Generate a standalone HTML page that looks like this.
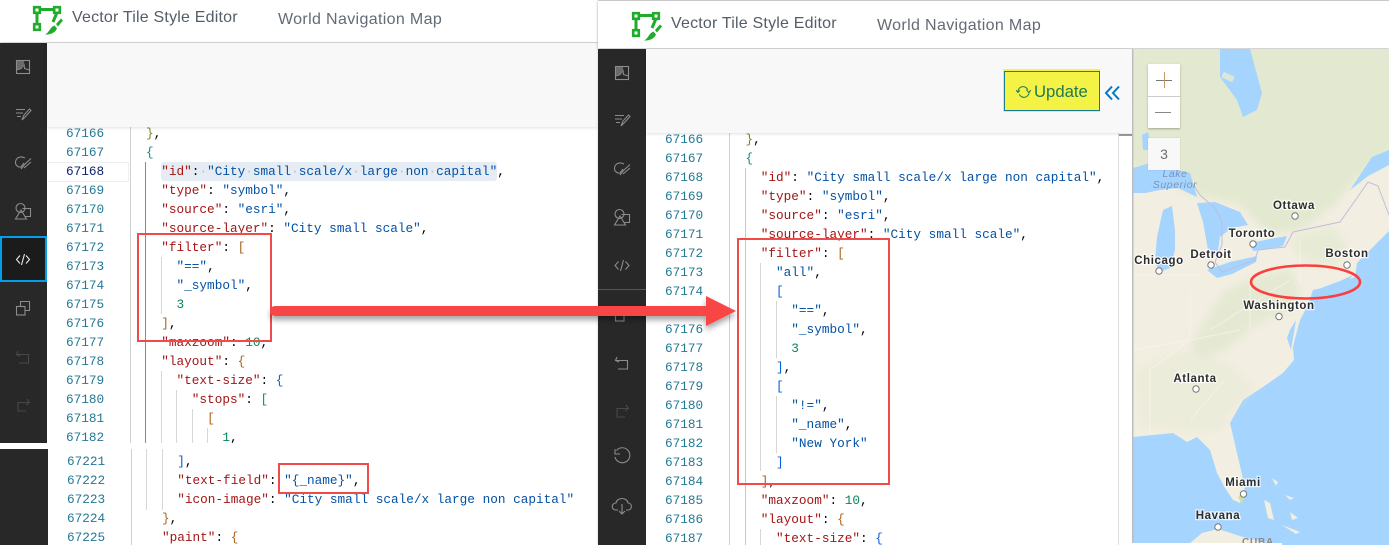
<!DOCTYPE html>
<html><head><meta charset="utf-8">
<style>
html,body{margin:0;padding:0;background:#fff}
#r{position:relative;width:1389px;height:545px;overflow:hidden;background:#fff}
.a{position:absolute}
pre{margin:0;position:absolute;font:12.73px/19px "Liberation Mono","DejaVu Sans Mono",monospace;color:#000;white-space:pre}
.n{color:#237893}
.k{color:#a31515}.s{color:#0451a5}.d{color:#098658}
.o{color:#a8651e}.b{color:#0a5fe0}.t{color:#128a8a}.g{color:#7a8a20}
.w{color:#b8c0c8}
.title{position:absolute;font:16px "Liberation Sans",sans-serif;color:#555d68;white-space:nowrap;letter-spacing:.2px}
.world{letter-spacing:.35px;color:#636b75}
.g1{position:absolute;width:1px;background:#d6d6d6}
.city{font:bold 11.5px "Liberation Sans",sans-serif;fill:#2d2d2d;stroke:#fff;stroke-width:2.4px;paint-order:stroke;letter-spacing:.6px;text-anchor:middle;stroke-opacity:.75}
.dot{fill:#fff;stroke:#777;stroke-width:1}
</style></head><body>
<div id="r">

<!-- LEFT PANEL -->
<div class="a" style="left:0;top:0;width:598px;height:42px;background:#fff;box-shadow:0 1px 2px rgba(0,0,0,.25)"></div>
<svg class="a" style="left:0;top:0" width="70" height="42" viewBox="0 0 70 42">
<g fill="none" stroke="#1fac2a" stroke-width="3"><path d="M37 11V26M40 9.500H54M57 12.500L53 22"/></g>
<g fill="none" stroke="#1fac2a" stroke-width="2.600"><rect x="34.200" y="7.200" width="5.600" height="5.600" fill="#fff"/><rect x="54.200" y="7.200" width="5.600" height="5.600" fill="#fff"/><rect x="34.200" y="24.200" width="5.600" height="5.600" fill="#fff"/></g>
<path d="M56 24L61 18.500L63 20.500L58 26.500Z M54.500 25.500L57 28.500C55 33 50 34.800 45 34.500C49 33 49.500 27.500 54.500 25.500Z" fill="#1fac2a"/>
</svg>
<div class="title" style="left:72px;top:9px">Vector Tile Style Editor</div>
<div class="title world" style="left:278px;top:11px">World Navigation Map</div>

<div class="a" style="left:0;top:43px;width:47px;height:400px;background:#282828"></div>

<!-- left code -->
<div class="a" style="left:130px;top:127px;width:1px;height:316px;background:#d0d0d0"></div>
<div class="a" style="left:131px;top:449px;width:1px;height:96px;background:#d0d0d0"></div>
<div class="a" style="left:48px;top:162px;width:80px;height:18px;border:1px solid #eee;border-left:0"></div>
<div class="a" style="left:161px;top:162px;width:336px;height:19px;background:#e6ecf3;border-radius:3px"></div>
<div class="g1" style="left:145px;top:162px;height:281px;background:#8a8a8a"></div>
<div class="g1" style="left:161px;top:257px;height:57px"></div>
<div class="g1" style="left:161px;top:371px;height:72px"></div>
<div class="g1" style="left:176px;top:390px;height:53px"></div>
<div class="g1" style="left:192px;top:409px;height:34px"></div>
<div class="g1" style="left:207px;top:428px;height:15px"></div>
<div class="g1" style="left:146px;top:449px;height:61px"></div>
<div class="g1" style="left:162px;top:449px;height:61px"></div>

<pre class="n" style="left:66px;top:124px">67166
67167
<span style="color:#0b216f">67168</span>
67169
67170
67171
67172
67173
67174
67175
67176
67177
67178
67179
67180
67181
67182</pre>
<pre style="left:146px;top:124px"><span class="g">}</span>,
<span class="t">{</span>
  <span class="k">"id"</span>:<span class="w">·</span><span class="s">"City<span class="w">·</span>small<span class="w">·</span>scale/x<span class="w">·</span>large<span class="w">·</span>non<span class="w">·</span>capital"</span>,
  <span class="k">"type"</span>: <span class="s">"symbol"</span>,
  <span class="k">"source"</span>: <span class="s">"esri"</span>,
  <span class="k">"source-layer"</span>: <span class="s">"City small scale"</span>,
  <span class="k">"filter"</span>: <span class="o">[</span>
    <span class="s">"=="</span>,
    <span class="s">"_symbol"</span>,
    <span class="d">3</span>
  <span class="o">]</span>,
  <span class="k">"maxzoom"</span>: <span class="d">10</span>,
  <span class="k">"layout"</span>: <span class="o">{</span>
    <span class="k">"text-size"</span>: <span class="b">{</span>
      <span class="k">"stops"</span>: <span class="t">[</span>
        <span class="o">[</span>
          <span class="d">1</span>,</pre>
<div class="a" style="left:0;top:443px;width:598px;height:6px;background:#fff"></div>
<div class="a" style="left:0;top:449px;width:48px;height:96px;background:#282828"></div>
<pre class="n" style="left:67px;top:452px">67221
67222
67223
67224
67225</pre>
<pre style="left:162px;top:452px">  <span class="b">]</span>,
  <span class="k">"text-field"</span>: <span class="s">"{_name}"</span>,
  <span class="k">"icon-image"</span>: <span class="s">"City small scale/x large non capital"</span>
<span class="o">}</span>,
<span class="k">"paint"</span>: <span class="o">{</span></pre>

<div class="a" style="left:47px;top:43px;width:551px;height:84px;background:#f8f8f8;box-shadow:0 1px 3px rgba(0,0,0,.12)"></div>

<!-- left sidebar icons -->
<svg class="a" style="left:0;top:43px" width="47" height="400" viewBox="0 43 47 400" fill="none" stroke="#8c8c8c" stroke-width="1.100">
<rect x="16.500" y="60.500" width="13" height="13"/><path d="M16.500 70L21 68.500 24 64.500 24.500 68.500 29.500 70"/><path d="M17 61H24L24 65 21 68 17 69.500Z" fill="#6a6a6a" stroke="none"/>
<path d="M16 109.500H25M16 113H23M17 116.500H21M22 120L24 115 29.500 109 31 110.500 25.500 116.500Z"/>
<path d="M25 158C19 155 15.500 159 15.500 162.500C15.500 166 19 167.500 21 167L24 163M19 161.500h.1M22 159.500h.1M18.500 165h.1M21 169L25 164 31 158.500M24 168L31 162"/>
<circle cx="20.500" cy="208" r="4.500"/><path d="M22.500 208.500H30.500V216.500H25M21 210L15.500 219H26.500Z"/>
<rect x="16.500" y="306.500" width="8.500" height="8.500"/><path d="M20.500 306V301.500H29.500V310.500H25"/>
<g stroke="#484848"><path d="M18 351L16.500 354.500 20 356M17 354.500H28.500V363H19"/><path d="M27 399L29.500 402.500 26 405M29 402.500H18V411H26"/></g>
</svg>
<div class="a" style="left:0;top:236px;width:47px;height:46px;box-sizing:border-box;border:2.500px solid #009fee;background:#1b1b1b"></div>
<svg class="a" style="left:0;top:236px" width="47" height="46" fill="none" stroke="#e8e8e8" stroke-width="1.100"><path d="M20 19.500L16.500 23.500 20 27.500M26 19.500L29.500 23.500 26 27.500M24.500 18L21.500 29"/></svg>

<!-- RED BOXES LEFT -->
<div class="a" style="left:137px;top:233px;width:135px;height:109px;border:2px solid #f04a4a;box-sizing:border-box"></div>
<div class="a" style="left:278px;top:463px;width:91px;height:31px;border:2px solid #f04a4a;box-sizing:border-box"></div>

<!-- RIGHT PANEL -->
<div class="a" style="left:598px;top:0;width:791px;height:545px;background:#fff;box-shadow:-1px 0 2px rgba(0,0,0,.08)"></div>
<div class="a" style="left:598px;top:0;width:791px;height:1px;background:#ccc"></div>
<div class="a" style="left:598px;top:1px;width:791px;height:47px;background:#fff;box-shadow:0 1px 2px rgba(0,0,0,.25)"></div>
<svg class="a" style="left:599px;top:6px" width="70" height="42" viewBox="0 0 70 42">
<g fill="none" stroke="#1fac2a" stroke-width="3"><path d="M37 11V26M40 9.500H54M57 12.500L53 22"/></g>
<g fill="none" stroke="#1fac2a" stroke-width="2.600"><rect x="34.200" y="7.200" width="5.600" height="5.600" fill="#fff"/><rect x="54.200" y="7.200" width="5.600" height="5.600" fill="#fff"/><rect x="34.200" y="24.200" width="5.600" height="5.600" fill="#fff"/></g>
<path d="M56 24L61 18.500L63 20.500L58 26.500Z M54.500 25.500L57 28.500C55 33 50 34.800 45 34.500C49 33 49.500 27.500 54.500 25.500Z" fill="#1fac2a"/>
</svg>
<div class="title" style="left:671px;top:15px">Vector Tile Style Editor</div>
<div class="title world" style="left:877px;top:17px">World Navigation Map</div>

<div class="a" style="left:598px;top:49px;width:48px;height:496px;background:#282828"></div>
<div class="a" style="left:598px;top:289px;width:48px;height:1px;background:#555"></div>

<!-- right code -->
<div class="a" style="left:729px;top:133px;width:1px;height:412px;background:#d0d0d0"></div>
<div class="g1" style="left:745px;top:168px;height:377px;background:#c8c8c8"></div>
<div class="g1" style="left:760px;top:263px;height:208px"></div>
<div class="g1" style="left:760px;top:529px;height:16px"></div>
<div class="g1" style="left:776px;top:301px;height:57px"></div>
<div class="g1" style="left:776px;top:396px;height:57px"></div>
<pre class="n" style="left:665px;top:130px">67166
67167
67168
67169
67170
67171
67172
67173
67174

67176
67177
67178
67179
67180
67181
67182
67183
67184
67185
67186
67187</pre>
<pre style="left:745.500px;top:130px"><span class="g">}</span>,
<span class="t">{</span>
  <span class="k">"id"</span>: <span class="s">"City small scale/x large non capital"</span>,
  <span class="k">"type"</span>: <span class="s">"symbol"</span>,
  <span class="k">"source"</span>: <span class="s">"esri"</span>,
  <span class="k">"source-layer"</span>: <span class="s">"City small scale"</span>,
  <span class="k">"filter"</span>: <span class="o">[</span>
    <span class="s">"all"</span>,
    <span class="b">[</span>
      <span class="s">"=="</span>,
      <span class="s">"_symbol"</span>,
      <span class="d">3</span>
    <span class="b">]</span>,
    <span class="b">[</span>
      <span class="s">"!="</span>,
      <span class="s">"_name"</span>,
      <span class="s">"New York"</span>
    <span class="b">]</span>
  <span class="o">]</span>,
  <span class="k">"maxzoom"</span>: <span class="d">10</span>,
  <span class="k">"layout"</span>: <span class="o">{</span>
    <span class="k">"text-size"</span>: <span class="b">{</span></pre>

<!-- right scroll column -->
<div class="a" style="left:1118px;top:133px;width:15px;height:412px;background:#fff;border-left:1px solid #ddd;box-sizing:border-box"></div>
<div class="a" style="left:1119px;top:134px;width:14px;height:2px;background:#999"></div>
<div class="a" style="left:646px;top:49px;width:486px;height:84px;background:#f8f8f8;box-shadow:0 1px 3px rgba(0,0,0,.12)"></div>

<!-- update -->
<div class="a" style="left:1003px;top:69px;width:97px;height:43px;background:#f5f246"></div>
<div class="a" style="left:1004px;top:71px;width:96px;height:40px;box-sizing:border-box;border:1px solid #1a7a90"></div>
<svg class="a" style="left:1016px;top:85px" width="15" height="14" viewBox="0 0 16 15" fill="none" stroke="#1e7c50" stroke-width="1.100"><path d="M2 7A5.500 5.500 0 0 1 12.500 5M14 8A5.500 5.500 0 0 1 3.500 10"/><path d="M0 5.500L2 8 4.200 5.800M11 5L13.800 8 16 5.500"/></svg>
<div class="a" style="left:1034px;top:82px;font:16.700px 'Liberation Sans',sans-serif;color:#1c7a55">Update</div>
<svg class="a" style="left:1104px;top:85px" width="17" height="16" viewBox="0 0 17 16" fill="none" stroke="#0079c1" stroke-width="2"><path d="M8 1.500L2 8l6 6.500M15 1.500L9 8l6 6.500"/></svg>

<!-- MAP -->
<svg class="a" style="left:1132px;top:49px" width="257" height="496" viewBox="1132 49 257 496">
<defs><filter id="bl" x="-10%" y="-10%" width="120%" height="120%"><feGaussianBlur stdDeviation="4"/></filter></defs>
<rect x="1132" y="49" width="257" height="496" fill="#a5d4ff"/>
<path fill="#f2eee1" d="M1132 49H1389V231L1372 248 1357 263 1355 277 1340 283 1322 288 1313 290 1308 305 1300 320 1296 335 1293 347 1294 360 1283 373 1263 387 1243 400 1230 423 1234 440 1237 453 1245 487 1240 503 1233 500 1225 488 1217 473 1210 450 1197 437 1187 442 1173 433 1153 435 1133 437 1132 437Z"/>
<g filter="url(#bl)" fill="#e3e9d0">
<path d="M1132 40H1395V150L1350 185 1335 205 1300 230 1270 235 1240 205 1195 195 1140 170 1125 160Z"/>
<path d="M1290 240L1332 225 1350 250 1330 268 1300 258Z" opacity=".7"/>
<path d="M1225 290L1262 275 1290 268 1300 290 1290 310 1255 325 1225 350 1200 360 1190 345Z" opacity=".85"/>
<path d="M1133 370L1180 350 1230 365 1255 390 1232 410 1222 430 1190 432 1140 425Z" opacity=".4"/>
</g>
<g fill="none" stroke="#f8f5ee" stroke-width="1" opacity=".7">
<path d="M1190 290V340M1133 350L1190 340 1240 330M1150 435V370L1190 340M1225 380L1190 420M1290 280L1210 330M1133 275H1205M1250 280V330M1300 240V285"/>
</g>
<path d="M1238 497L1245 492 1242 504Z" fill="#cfe0a8"/>
<g fill="#a5d4ff">
<path d="M1220 49H1250L1262 93 1257 110 1243 117 1237 100 1220 77Z"/>
<path d="M1142 135L1148 132 1152 150 1143 150Z"/>
<path d="M1133 168L1150 163 1190 173 1197 197 1178 188 1160 190 1145 193 1133 193Z"/>
<path d="M1163 210L1172 206 1175 230 1175 250 1170 268 1160 272 1155 262 1157 237Z"/>
<path d="M1197 203L1215 202 1240 212 1248 225 1232 228 1220 237 1217 257 1208 250 1203 222Z"/>
<path d="M1250 243L1270 239 1287 236 1283 246 1262 250 1253 251Z"/>
<path d="M1207 270L1230 262 1257 256 1256 262 1232 274 1217 278Z"/>
<path d="M1389 150L1372 157 1350 190 1368 176 1389 165Z"/>
<path d="M1313 291L1340 281 1353 275 1345 285 1322 292Z"/>
<path d="M1290 330L1296 320 1291 350 1287 338Z"/>
</g>
<rect x="1222" y="74" width="12" height="6" fill="#e3e9d0" opacity=".9" transform="rotate(25 1228 77)"/>
<g fill="none" stroke="#c2bdd9" stroke-width="1"><path d="M1190 180L1200 195 1215 208 1222 222 1222 245 1215 262 1222 272 1255 260 1258 250 1285 247 1293 232 1340 222 1352 205 1368 182 1378 186 1389 215"/></g>
<g fill="#f2eee1">
<path d="M1190 543L1202 533 1218 529 1243 537 1277 545 1190 545Z"/>
<path d="M1264 500L1270 503 1274 520 1268 518Z"/>
<path d="M1272 478L1278 482 1276 486Z M1285 495L1290 500 1294 498Z M1290 512L1298 518 1292 520Z M1282 525L1300 532 1296 534Z"/>
</g>
<text x="1175" y="177" text-anchor="middle" font-family="Liberation Sans,sans-serif" font-style="italic" font-size="10.500" fill="#7a93bd" letter-spacing=".6">Lake</text>
<text x="1175" y="188" text-anchor="middle" font-family="Liberation Sans,sans-serif" font-style="italic" font-size="10.500" fill="#7a93bd" letter-spacing=".6">Superior</text>
<text class="city" x="1294" y="209">Ottawa</text><circle class="dot" cx="1295" cy="216" r="3.200"/>
<text class="city" x="1252" y="237">Toronto</text><circle class="dot" cx="1253" cy="244" r="3.200"/>
<text class="city" x="1159" y="264">Chicago</text><circle class="dot" cx="1159" cy="271" r="3.200"/>
<text class="city" x="1211" y="258">Detroit</text><circle class="dot" cx="1211" cy="265" r="3.200"/>
<text class="city" x="1347" y="257">Boston</text><circle class="dot" cx="1347" cy="265" r="3.200"/>
<text class="city" x="1279" y="309">Washington</text><circle class="dot" cx="1279" cy="316.500" r="3.200"/>
<text class="city" x="1195" y="382">Atlanta</text><circle class="dot" cx="1196" cy="389" r="3.200"/>
<text class="city" x="1243" y="486">Miami</text><circle class="dot" cx="1243.500" cy="494" r="3.200"/>
<text class="city" x="1218" y="519">Havana</text><circle class="dot" cx="1218" cy="527" r="3.200"/>
<text x="1258" y="545" text-anchor="middle" font-family="Liberation Sans,sans-serif" font-size="10" font-weight="bold" fill="#8a8a8a" letter-spacing=".8">CUBA</text>
<rect x="1132" y="49" width="1.500" height="496" fill="#bdbdbd"/>
<ellipse cx="1305.500" cy="282" rx="54.500" ry="16.500" fill="none" stroke="#f9403f" stroke-width="2.600"/>
</svg>
<div class="a" style="left:1132px;top:543px;width:150px;height:2px;background:#fff"></div>

<!-- zoom controls -->
<div class="a" style="left:1148px;top:64px;width:32px;height:64px;background:#fff;box-shadow:0 1px 2px rgba(0,0,0,.3)"></div>
<div class="a" style="left:1148px;top:96px;width:32px;height:1px;background:#ccc"></div>
<div class="a" style="left:1156px;top:80px;width:16px;height:1px;background:#777"></div>
<div class="a" style="left:1163.500px;top:72px;width:1px;height:16px;background:#c89a60"></div>
<div class="a" style="left:1155px;top:112px;width:16px;height:1px;background:#888"></div>
<div class="a" style="left:1148px;top:138px;width:32px;height:32px;background:#f8f8f8;font:14px/32px 'Liberation Sans',sans-serif;color:#6e6e6e;text-align:center;box-shadow:0 0 1px rgba(0,0,0,.2)">3</div>

<!-- right sidebar icons -->
<svg class="a" style="left:598px;top:49px" width="48" height="496" viewBox="598 49 48 496" fill="none" stroke="#8c8c8c" stroke-width="1.100">
<g transform="translate(599,6)">
<rect x="16.500" y="60.500" width="13" height="13"/><path d="M16.500 70L21 68.500 24 64.500 24.500 68.500 29.500 70"/><path d="M17 61H24L24 65 21 68 17 69.500Z" fill="#6a6a6a" stroke="none"/>
<path d="M16 109.500H25M16 113H23M17 116.500H21M22 120L24 115 29.500 109 31 110.500 25.500 116.500Z"/>
<path d="M25 158C19 155 15.500 159 15.500 162.500C15.500 166 19 167.500 21 167L24 163M19 161.500h.1M22 159.500h.1M18.500 165h.1M21 169L25 164 31 158.500M24 168L31 162"/>
<circle cx="20.500" cy="208" r="4.500"/><path d="M22.500 208.500H30.500V216.500H25M21 210L15.500 219H26.500Z"/>
<path d="M19.500 255.500L16 259.500 19.500 263.500M26.500 255.500L30 259.500 26.500 263.500M24.500 254L21.500 265"/>
<rect x="16.500" y="306.500" width="8.500" height="8.500"/>
<path d="M18 351L16.500 354.500 20 356M17 354.500H28.500V363H19"/>
<path stroke="#484848" d="M27 399L29.500 402.500 26 405M29 402.500H18V411H26"/>
<path d="M17.500 444.500A7.500 7.500 0 1 1 16 451M16 443V448H21"/>
<path d="M19 504H17C12 504 12 497 17 497 18 491 28 491 29 497 33.500 497 33.500 504 29 504H27M23 498V508M20 505L23 508 26 505"/>
</g>
</svg>

<!-- red box right -->
<div class="a" style="left:737px;top:238px;width:153px;height:247px;border:2px solid #f04a4a;box-sizing:border-box"></div>

<!-- arrow -->
<svg class="a" style="left:260px;top:286px" width="490" height="60" viewBox="260 286 490 60">
<defs><filter id="f" x="-5%" y="-60%" width="110%" height="260%"><feDropShadow dx="0" dy="4" stdDeviation="3" flood-color="#000" flood-opacity=".35"/></filter></defs>
<path filter="url(#f)" fill="#f84444" d="M275 306H706V296L736 311 706 326V316H275A5 5 0 0 1 275 306Z"/>
</svg>
</div>
</body></html>
